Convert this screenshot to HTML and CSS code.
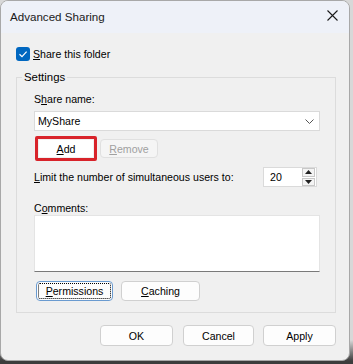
FILE: index.html
```html
<!DOCTYPE html>
<html lang="en">

<head>
  <meta charset="UTF-8">
  <meta name="viewport" content="width=device-width, initial-scale=1.0">
  <title>Advanced Sharing</title>
  <link rel="stylesheet" href="styles.css">
</head>

<body>
  <div class="window">
    <div class="titlebar">
      <span class="title">Advanced Sharing</span>
      <svg class="close" width="11" height="11" viewBox="0 0 11 11">
        <path d="M0.5 0.5 L10.5 10.5 M10.5 0.5 L0.5 10.5" stroke="#1a1a1a" stroke-width="1.1" fill="none" />
      </svg>
    </div>

    <div class="content">
      <label class="check-row">
        <span class="checkbox">
          <svg width="10" height="10" viewBox="0 0 10 10">
            <path d="M1.5 5.2 L4 7.6 L8.6 2.6" stroke="white" stroke-width="1.2" fill="none" />
          </svg>
        </span>
        <span><u>S</u>hare this folder</span>
      </label>

      <fieldset class="group">
        <legend>Settings</legend>

        <div class="field-label">S<u>h</u>are name:</div>
        <div class="combo">
          <span>MyShare</span>
          <svg width="9" height="5" viewBox="0 0 9 5">
            <path d="M0.5 0.5 L4.5 4.5 L8.5 0.5" stroke="#555" stroke-width="1" fill="none" />
          </svg>
        </div>

        <div class="btn-row">
          <div class="highlight">
            <button class="btn"><u>A</u>dd</button>
          </div>
          <button class="btn disabled"><u>R</u>emove</button>
        </div>

        <div class="limit-row">
          <span><u>L</u>imit the number of simultaneous users to:</span>
          <div class="spin">
            <span>20</span>
            <div class="spin-btns">
              <div class="spin-btn"><svg width="7" height="4" viewBox="0 0 7 4"><path d="M0 4 L3.5 0 L7 4 Z" fill="#222" /></svg></div>
              <div class="spin-btn"><svg width="7" height="4" viewBox="0 0 7 4"><path d="M0 0 L3.5 4 L7 0 Z" fill="#222" /></svg></div>
            </div>
          </div>
        </div>

        <div class="field-label comments-label">C<u>o</u>mments:</div>
        <div class="textarea"></div>

        <div class="btn-row bottom">
          <button class="btn focused"><u>P</u>ermissions</button>
          <button class="btn"><u>C</u>aching</button>
        </div>
      </fieldset>

      <div class="footer">
        <button class="btn ok">OK</button>
        <button class="btn cancel">Cancel</button>
        <button class="btn apply">Apply</button>
      </div>
    </div>
  </div>
</body>

</html>
```

FILE: styles.css
```css
body {
  margin: 0;
  padding: 0;
  font-family: 'Liberation Sans', Arial, sans-serif;
  font-size: 10.6px;
  color: #000;
  background: linear-gradient(#d8d8d8, #d8d8d8 340px, #3c3c3c 361px);
  height: 364px;
  overflow: hidden;
}

.window {
  width: 350px;
  height: 361px;
  background: #f0f0f0;
  border: 1px solid #a8a8a8;
  border-radius: 8px;
  overflow: hidden;
  display: flex;
  flex-direction: column;
  box-sizing: border-box;
}

.titlebar {
  height: 32px;
  background: #eef1f8;
  display: flex;
  align-items: center;
  justify-content: space-between;
  padding: 0 11px 0 9px;
  flex-shrink: 0;
}

.title {
  font-size: 11.6px;
  color: #1a1a1a;
  margin-top: -1px;
}

.close {
  margin-top: -3px;
}

.content {
  padding: 14px 13px 0 15px;
}

.check-row {
  display: flex;
  align-items: center;
  gap: 3px;
  height: 14px;
  margin-bottom: 10px;
}

.checkbox {
  width: 14px;
  height: 14px;
  border-radius: 3px;
  background: #0067c0;
  display: flex;
  align-items: center;
  justify-content: center;
}

.group {
  margin: 0;
  border: 1px solid #dcdcdc;
  padding: 9px 15px 11px 17px;
}

.group legend {
  margin-left: -12px;
  padding: 0 2px;
  font-size: 11.4px;
}

.field-label {
  height: 14px;
  line-height: 14px;
}

.combo {
  margin-top: 5px;
  height: 20px;
  background: white;
  border: 1px solid #dadada;
  box-sizing: border-box;
  display: flex;
  align-items: center;
  justify-content: space-between;
  padding: 0 5px 0 3px;
}

.btn-row {
  display: flex;
  align-items: center;
  gap: 3px;
  margin-top: 5px;
}

.highlight {
  border: 3px solid #d8232a;
  border-radius: 2px;
  padding: 1px;
  margin-left: 1px;
}

.btn {
  font-family: inherit;
  font-size: 10.6px;
  background: #fdfdfd;
  border: 1px solid #d0d0d0;
  border-radius: 4px;
  height: 20px;
  padding: 0;
  color: #000;
}

.highlight .btn {
  width: 54px;
  height: 17px;
  border-color: #fff;
  border-radius: 0;
  background: white;
}

.btn.disabled {
  width: 58px;
  height: 19px;
  color: #a0a0a0;
  background: #f5f5f5;
  border-color: #e0e0e0;
}

.limit-row {
  display: flex;
  align-items: center;
  justify-content: space-between;
  margin-top: 6px;
  padding-right: 3px;
  white-space: nowrap;
}

.spin {
  width: 54px;
  height: 20px;
  flex-shrink: 0;
  background: white;
  border: 1px solid #dadada;
  box-sizing: border-box;
  display: flex;
  justify-content: space-between;
  padding-left: 6px;
  align-items: center;
}

.spin-btns {
  display: flex;
  flex-direction: column;
  gap: 1px;
  height: 18px;
  padding: 0 1px;
}

.spin-btn {
  width: 13px;
  flex: 1;
  border: 1px solid #c8c8c8;
  background: #f4f4f4;
  display: flex;
  align-items: center;
  justify-content: center;
  box-sizing: border-box;
}

.comments-label {
  margin-top: 14px;
}

.textarea {
  margin-top: 0;
  height: 57px;
  background: white;
  border: 1px solid #e4e4e4;
  border-bottom: 1px solid #7a7a7a;
  box-sizing: border-box;
}

.btn-row.bottom {
  margin-top: 9px;
  gap: 8px;
}

.btn-row.bottom .btn {
  width: 79px;
  height: 20px;
}

.btn-row.bottom .btn.focused {
  width: 77px;
  margin-left: 2px;
}

.btn.focused {
  outline: 1px dotted #000;
  outline-offset: -3px;
  border-color: #6a9bd0;
}

.footer {
  display: flex;
  justify-content: flex-end;
  margin-top: 12px;
}

.footer .btn {
  height: 21px;
}

.btn.ok {
  width: 73px;
}

.btn.cancel {
  width: 71px;
  margin-left: 10px;
}

.btn.apply {
  width: 73px;
  margin-left: 9px;
}
```
